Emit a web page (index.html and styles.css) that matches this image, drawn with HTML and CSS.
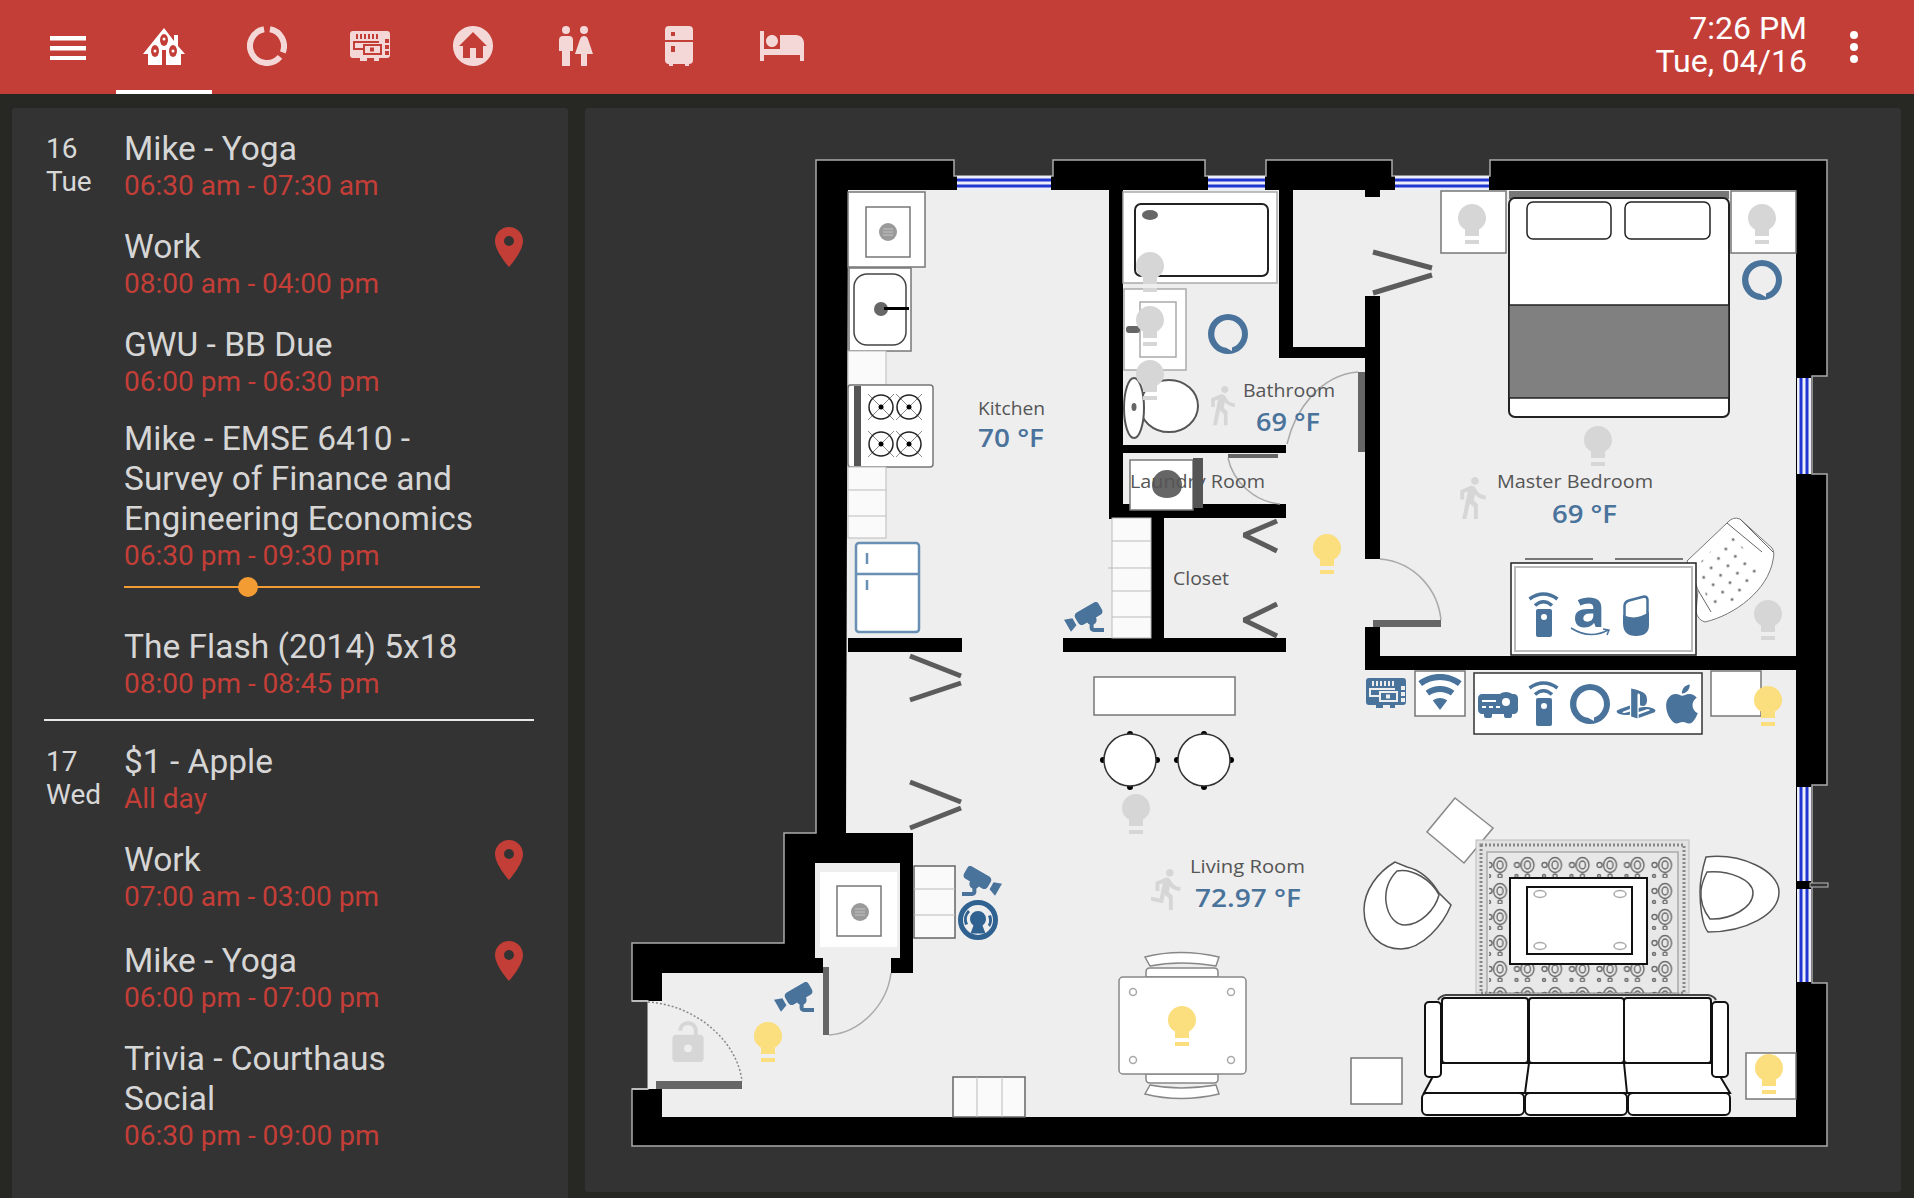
FILE: index.html
```html
<!DOCTYPE html>
<html lang="en">
<head>
    <meta charset="UTF-8">
    <title>Home Dashboard</title>
    <link rel="stylesheet" href="styles.css">
</head>
<body>
    <svg class="defs" width="0" height="0">
        <symbol id="bulb" viewBox="0 0 28 40"><path d="M14 0C6.3 0 0 6.3 0 14c0 5 2.5 9 7 11.5V32h14v-6.500c4.500-2.500 7-6.500 7-11.500C28 6.300 21.700 0 14 0z"/><rect x="7" y="36" width="14" height="4"/></symbol>
        <symbol id="alexa" viewBox="0 0 40 40"><path fill-rule="evenodd" d="M20 0A20 20 0 1 0 20 40A20 20 0 1 0 20 0ZM20 6A14 14 0 0 1 24 33.400L24 37L18 33.800A14 14 0 0 1 20 6Z"/></symbol>
        <symbol id="walk" viewBox="5 1 15 23"><path d="M13.500 5.500c1.100 0 2-.9 2-2s-.9-2-2-2-2 .9-2 2 .9 2 2 2zM9.800 8.900L7 23h2.100l1.800-8 2.100 2v6h2v-7.500l-2.100-2 .6-3C14.800 12 16.800 13 19 13v-2c-1.900 0-3.500-1-4.300-2.400l-1-1.600c-.4-.6-1-1-1.700-1-.3 0-.5.100-.8.100L6 8.300V13h2V9.600l1.800-.7"/></symbol>
        <symbol id="run" viewBox="4 1 16 23"><path d="M13.490 5.480c1.100 0 2-.9 2-2s-.9-2-2-2-2 .9-2 2 .9 2 2 2zm-3.600 13.900l1-4.400 2.100 2v6h2v-7.500l-2.100-2 .6-3c1.300 1.500 3.300 2.500 5.500 2.500v-2c-1.900 0-3.500-1-4.300-2.400l-1-1.600c-.4-.6-1-1-1.700-1-.3 0-.5.100-.8.100l-5.200 2.200v4.700h2v-3.400l1.800-.7-1.600 8.100-4.900-1-.4 2 7 1.400z"/></symbol>
        <symbol id="cctv" viewBox="2 5 20 15"><path d="M18.150 4.940C17.770 4.910 17.370 5 17 5.200L8.350 10.200C7.390 10.760 7.070 12 7.620 12.940L9.120 15.530C9.670 16.500 10.890 16.820 11.850 16.270L13.650 15.230C13.920 15.690 14.320 16.060 14.810 16.270V18.040C14.810 19.130 15.700 20 16.810 20H22V18.040H16.810V16.270C17.720 15.870 18.310 14.970 18.310 14C18.310 13.540 18.190 13.110 17.970 12.730L20.220 11.420C21.180 10.870 21.500 9.660 20.950 8.690L19.450 6.100C19.070 5.460 18.610 5 18.150 4.940M6.220 13.170L2 13.870L2.750 15.170L4.750 18.630L5.500 19.930L8.220 16.630L6.220 13.170Z"/></symbol>
        <symbol id="board" viewBox="0 0 40 30"><path fill-rule="evenodd" d="M3 0H37A3 3 0 0 1 40 3V24A3 3 0 0 1 37 27H29V30H24V27H17V30H10V27H3A3 3 0 0 1 0 24V3A3 3 0 0 1 3 0ZM6 3h2v5H6zM10 3h2v5h-2zM14 3h2v5h-2zM18 3h2v5h-2zM22 3h2v5h-2zM26 3h2v5h-2zM3 10H29V12H5V17H13V19H3ZM35 8h4v4h-4zM35 14h4v4h-4zM35 20h4v4h-4zM13 13H32V24H13ZM15 15V22H30V15ZM20 16.500h4v4h-4Z"/></symbol>
        <symbol id="wifi" viewBox="1 3 22 18"><path d="M12 21L15.600 16.200C14.600 15.450 13.350 15 12 15C10.650 15 9.400 15.450 8.400 16.200L12 21M12 3C7.950 3 4.210 4.340 1.200 6.600L3 9C5.500 7.120 8.620 6 12 6C15.380 6 18.500 7.120 21 9L22.800 6.600C19.790 4.340 16.050 3 12 3M12 9C9.300 9 6.810 9.890 4.800 11.400L6.600 13.800C8.100 12.670 9.970 12 12 12C14.030 12 15.900 12.670 17.400 13.800L19.200 11.400C17.190 9.890 14.700 9 12 9Z"/></symbol>
        <symbol id="remote" viewBox="0 0 31 46"><path class="arc" d="M1.500 8Q15.500 -2 29.500 8"/><path class="arc" d="M7 14.500Q15.500 7 24 14.500"/><path fill-rule="evenodd" d="M10 18H22A2 2 0 0 1 24 20V44A2 2 0 0 1 22 46H10A2 2 0 0 1 8 44V20A2 2 0 0 1 10 18ZM16 23A3 3 0 1 0 16 29A3 3 0 1 0 16 23Z"/></symbol>
        <symbol id="ghome" viewBox="0 0 26 41"><path class="ghome-top" d="M1.500 28V11Q1.500 7 6 5.500L21 1.500Q24.500 1.500 24.500 5V30"/><path d="M0 20Q13 26 26 17V30Q26 41 13 41Q0 41 0 28Z"/></symbol>
        <symbol id="projector" viewBox="2 6 20 13"><path fill-rule="evenodd" d="M16 6C14.870 6 13.770 6.350 12.840 7H4C2.890 7 2 7.890 2 9V15C2 16.110 2.890 17 4 17H5V18A1 1 0 0 0 6 19H8A1 1 0 0 0 9 18V17H15V18A1 1 0 0 0 16 19H18A1 1 0 0 0 19 18V17H20C21.110 17 22 16.110 22 15V9C22 7.890 21.110 7 20 7H19.150C18.230 6.350 17.130 6 16 6ZM16 9A2 2 0 1 0 16 13A2 2 0 1 0 16 9ZM4 10H11V11H4ZM4 13H6V14H4ZM7.500 13H9.500V14H7.500ZM11 13H13V14H11Z"/></symbol>
        <symbol id="playstation" viewBox="1.800 4 20.400 16"><path d="M9.500 4.270C10.880 4.530 12.900 5.140 14 5.500C16.750 6.450 17.690 7.630 17.690 10.290C17.690 12.890 16.090 13.870 14.050 12.890V8.050C14.050 7.500 13.950 6.970 13.410 6.820C13 6.690 12.760 7.070 12.760 7.630V19.730L9.500 18.690V4.270M13.370 17.620L18.620 15.750C19.220 15.540 19.310 15.240 18.830 15.080C18.340 14.920 17.470 14.970 16.870 15.180L13.370 16.410V14.450L13.580 14.380C13.580 14.380 14.590 14 16 13.870C17.430 13.710 19.170 13.890 20.530 14.400C22.070 14.890 22.250 15.610 21.860 16.100C21.470 16.600 20.500 16.950 20.500 16.950L13.370 19.500V17.620M3.500 17.420C1.930 17 1.660 16.050 2.380 15.500C3.050 15 4.180 14.650 4.180 14.650L8.860 13V14.880L5.500 16.090C4.900 16.300 4.810 16.600 5.290 16.760C5.770 16.920 6.650 16.870 7.240 16.660L8.860 16.080V17.770L8.540 17.820C6.920 18.090 5.200 18 3.500 17.420Z"/></symbol>
        <symbol id="apple" viewBox="3.800 2 16.400 20"><path d="M18.710 19.500C17.880 20.740 17 21.950 15.660 21.970C14.320 22 13.890 21.180 12.370 21.180C10.840 21.180 10.370 21.950 9.100 22C7.790 22.050 6.800 20.680 5.960 19.470C4.250 17 2.940 12.450 4.700 9.390C5.570 7.870 7.130 6.910 8.820 6.880C10.100 6.860 11.320 7.750 12.110 7.750C12.890 7.750 14.370 6.680 15.920 6.840C16.570 6.870 18.390 7.100 19.560 8.820C19.470 8.880 17.390 10.100 17.410 12.630C17.440 15.650 20.060 16.660 20.090 16.670C20.060 16.740 19.670 18.110 18.710 19.500M13 3.500C13.730 2.670 14.940 2.040 15.940 2C16.070 3.170 15.600 4.350 14.900 5.190C14.210 6.040 13.070 6.700 11.950 6.610C11.800 5.460 12.360 4.260 13 3.500Z"/></symbol>
        <symbol id="lock" viewBox="4 1 16 21"><path d="M18 8A2 2 0 0 1 20 10V20A2 2 0 0 1 18 22H6A2 2 0 0 1 4 20V10A2 2 0 0 1 6 8H15V6A3 3 0 0 0 12 3A3 3 0 0 0 9 6H7A5 5 0 0 1 12 1A5 5 0 0 1 17 6V8H18M12 17A2 2 0 0 0 14 15A2 2 0 0 0 12 13A2 2 0 0 0 10 15A2 2 0 0 0 12 17Z"/></symbol>
        <symbol id="gauge" viewBox="0 0 40 40"><circle class="gauge-ring" cx="20" cy="20" r="17.500"/><path d="M20 11a8 8 0 0 1 8 8c0 3-1.500 5-3.500 6.500l3 8H12.500l3-8C13.500 24 12 22 12 19a8 8 0 0 1 8-8zM7 25a13.500 13.500 0 0 1 3-15l2 2a10.500 10.500 0 0 0-2 12zM33 15a13.500 13.500 0 0 1-1 12l-2-2a10.500 10.500 0 0 0 0-9z"/></symbol>
        <symbol id="pin" viewBox="5 2 14 20"><path d="M12 2C8.130 2 5 5.130 5 9c0 5.250 7 13 7 13s7-7.750 7-13c0-3.870-3.130-7-7-7zm0 9.500a2.500 2.500 0 0 1 0-5 2.500 2.500 0 0 1 0 5z"/></symbol>
        <pattern id="rug" width="27.500" height="26" patternUnits="userSpaceOnUse" x="1486" y="852">
            <ellipse class="rug-mark" cx="14" cy="13" rx="6.500" ry="7.500"/><ellipse class="rug-mark" cx="14" cy="13" rx="3" ry="4"/><circle class="rug-mark" cx="3.500" cy="13" r="2.500"/><circle class="rug-mark" cx="14" cy="24" r="2"/><circle class="rug-mark" cx="3" cy="24" r="1.500"/>
        </pattern>
        <pattern id="tuft" width="12" height="12" patternUnits="userSpaceOnUse" patternTransform="rotate(38)">
            <circle class="tuft-dot" cx="6" cy="6" r="1.500"/>
        </pattern>
    </svg>

    <header class="appbar">
        <div class="menu-btn">
            <svg width="36" height="24" viewBox="0 0 36 24"><rect width="36" height="4.500"/><rect y="10" width="36" height="4.500"/><rect y="20" width="36" height="4.500"/></svg>
        </div>
        <nav class="tabs">
            <div class="tab active">
                <svg width="42" height="37" viewBox="0 0 42 37"><path d="M21 0L31 13V7H35V18L42 26H38V37H23V22H19V37H5V26H0Z"/><ellipse class="cut" cx="21" cy="12" rx="4" ry="6"/><ellipse class="cut" cx="12" cy="23" rx="4" ry="6"/><ellipse class="cut" cx="30" cy="23" rx="4" ry="6"/><circle cx="21" cy="11" r="1.500"/><circle cx="12" cy="23" r="1.500"/><circle cx="30" cy="23" r="1.500"/></svg>
            </div>
            <div class="tab">
                <svg width="40" height="40" viewBox="0 0 40 40"><path class="tab-ring" d="M22.950 3.260A17 17 0 0 1 35.760 26.370M33.020 30.930A17 17 0 1 1 17.050 3.260"/></svg>
            </div>
            <div class="tab"><svg width="40" height="30"><use href="#board"/></svg></div>
            <div class="tab">
                <svg width="40" height="40" viewBox="2 2 20 20"><path d="M19.070 4.930C17.220 3 14.660 1.960 12 2C9.340 1.960 6.790 3 4.940 4.930C3 6.780 1.960 9.340 2 12C1.960 14.660 3 17.210 4.930 19.060C6.780 21 9.340 22.040 12 22C14.660 22.040 17.210 21 19.060 19.070C21 17.220 22.040 14.660 22 12C22.040 9.340 21 6.780 19.070 4.930M17 12V18H13.500V13H10.500V18H7V12H5L12 5L19 12H17Z"/></svg>
            </div>
            <div class="tab">
                <svg width="34" height="40" viewBox="4 2 17 20"><path d="M7.500 2A2 2 0 0 1 9.500 4A2 2 0 0 1 7.500 6A2 2 0 0 1 5.500 4A2 2 0 0 1 7.500 2M6 7H9A2 2 0 0 1 11 9V14.500H9.500V22H5.500V14.500H4V9A2 2 0 0 1 6 7M16.500 2A2 2 0 0 1 18.500 4A2 2 0 0 1 16.500 6A2 2 0 0 1 14.500 4A2 2 0 0 1 16.500 2M15 22V16H12L14.590 8.410C14.840 7.590 15.600 7 16.500 7C17.400 7 18.160 7.590 18.410 8.410L21 16H18V22H15Z"/></svg>
            </div>
            <div class="tab">
                <svg width="28" height="40" viewBox="5 2 14 20"><path d="M7 2H17A2 2 0 0 1 19 4V9H5V4A2 2 0 0 1 7 2M19 19A2 2 0 0 1 17 21V22H15V21H9V22H7V21A2 2 0 0 1 5 19V10H19V19M8 5V7H10V5H8M8 12V15H10V12H8Z"/></svg>
            </div>
            <div class="tab">
                <svg width="44" height="30" viewBox="1 5 22 15"><path d="M7 13c1.660 0 3-1.340 3-3S8.660 7 7 7s-3 1.340-3 3 1.340 3 3 3zm12-6h-8v7H3V5H1v15h2v-3h18v3h2v-9c0-2.210-1.790-4-4-4z"/></svg>
            </div>
        </nav>
        <div class="clock">
            <div>7:26 PM</div>
            <div>Tue, 04/16</div>
        </div>
        <div class="more-btn"><span></span><span></span><span></span></div>
    </header>

    <main class="content">
        <aside class="panel agenda">
            <section class="day">
                <div class="day-date"><div>16</div><div>Tue</div></div>
                <div class="day-events">
                    <div class="event">
                        <div><div class="event-title">Mike - Yoga</div><div class="event-time">06:30 am - 07:30 am</div></div>
                    </div>
                    <div class="event">
                        <div><div class="event-title">Work</div><div class="event-time">08:00 am - 04:00 pm</div></div>
                        <svg class="pin" width="28" height="40"><use href="#pin"/></svg>
                    </div>
                    <div class="event">
                        <div><div class="event-title">GWU - BB Due</div><div class="event-time">06:00 pm - 06:30 pm</div></div>
                    </div>
                    <div class="event event-tight">
                        <div>
                            <div class="event-title">Mike - EMSE 6410 -<br>Survey of Finance and<br>Engineering Economics</div>
                            <div class="event-time">06:30 pm - 09:30 pm</div>
                            <div class="progress"><div class="progress-line"></div><div class="progress-thumb"></div></div>
                        </div>
                    </div>
                    <div class="event">
                        <div><div class="event-title">The Flash (2014) 5x18</div><div class="event-time">08:00 pm - 08:45 pm</div></div>
                    </div>
                </div>
            </section>
            <section class="day day-next">
                <div class="day-date"><div>17</div><div>Wed</div></div>
                <div class="day-events">
                    <div class="event">
                        <div><div class="event-title">$1 - Apple</div><div class="event-time">All day</div></div>
                    </div>
                    <div class="event">
                        <div><div class="event-title">Work</div><div class="event-time">07:00 am - 03:00 pm</div></div>
                        <svg class="pin" width="28" height="40"><use href="#pin"/></svg>
                    </div>
                    <div class="event event-loose">
                        <div><div class="event-title">Mike - Yoga</div><div class="event-time">06:00 pm - 07:00 pm</div></div>
                        <svg class="pin" width="28" height="40"><use href="#pin"/></svg>
                    </div>
                    <div class="event">
                        <div><div class="event-title">Trivia - Courthaus<br>Social</div><div class="event-time">06:30 pm - 09:00 pm</div></div>
                    </div>
                </div>
            </section>
        </aside>

        <section class="panel plan">
            <!-- viewBox is in screenshot pixels so the floorplan coords read straight off the page -->
            <svg class="floorplan" width="1316" height="1084" viewBox="585 108 1316 1084">
                <!-- shell -->
                <path class="shell" d="M816 160H954V176H1053V160H1205V176H1266V160H1392V176H1490V160H1827V376H1812V474H1827V785H1812V983H1827V1146H632V1089H648V1001H632V943H784V833H816Z"/>
                <path class="floor" d="M848 190H1796V1117H662V1089H648V1001H662V973H913V833H846Z"/>
                <rect class="floor" x="815" y="863" width="85" height="95"/>
                <rect class="floor" x="823" y="950" width="68" height="25"/>
                <line class="thin" x1="632" y1="1001" x2="648" y2="1001"/>
                <line class="thin" x1="632" y1="1089" x2="648" y2="1089"/>

                <!-- windows -->
                <rect class="glass" x="957" y="176" width="94" height="14"/><path class="glass-lines" d="M957 180H1051M957 186H1051"/>
                <rect class="glass" x="1208" y="176" width="57" height="14"/><path class="glass-lines" d="M1208 180H1265M1208 186H1265"/>
                <rect class="glass" x="1395" y="176" width="94" height="14"/><path class="glass-lines" d="M1395 180H1489M1395 186H1489"/>
                <rect class="glass" x="1797" y="378" width="14" height="96"/><path class="glass-lines" d="M1801 378V474M1807 378V474"/>
                <rect class="glass" x="1797" y="787" width="14" height="94"/><path class="glass-lines" d="M1801 787V881M1807 787V881"/>
                <rect class="glass" x="1797" y="889" width="14" height="93"/><path class="glass-lines" d="M1801 889V982M1807 889V982"/>
                <rect class="wall" x="1796" y="881" width="14" height="8"/>
                <rect class="stub" x="1810" y="883" width="18" height="4"/>

                <!-- inner walls -->
                <rect class="wall" x="848" y="638" width="114" height="14"/>
                <rect class="wall" x="1063" y="638" width="223" height="14"/>
                <rect class="wall" x="1109" y="190" width="14" height="329"/>
                <rect class="wall" x="1151" y="518" width="13" height="120"/>
                <rect class="wall" x="1123" y="445" width="163" height="8"/>
                <rect class="wall" x="1109" y="504" width="177" height="14"/>
                <rect class="wall" x="1279" y="190" width="14" height="168"/>
                <rect class="wall" x="1279" y="347" width="86" height="11"/>
                <rect class="wall" x="1365" y="296" width="15" height="263"/>
                <rect class="wall" x="1365" y="190" width="15" height="7"/>
                <rect class="wall" x="1365" y="627" width="15" height="43"/>
                <rect class="wall" x="1365" y="656" width="431" height="14"/>

                <!-- doors -->
                <rect class="door" x="1373" y="620" width="68" height="7"/>
                <path class="swing" d="M1380 559C1415 562 1438 590 1441 620"/>
                <rect class="door" x="1358" y="372" width="7" height="80"/>
                <path class="swing" d="M1358 372C1320 375 1295 410 1287 444"/>
                <rect class="door" x="1228" y="454" width="50" height="4"/>
                <path class="swing" d="M1228 458C1233 482 1255 502 1280 504"/>
                <rect class="door" x="823" y="967" width="6" height="68"/>
                <path class="swing" d="M829 1035C860 1033 887 1005 891 973"/>
                <rect class="door" x="656" y="1081" width="86" height="8"/>
                <path class="swing dotted" d="M648 1002C695 1005 737 1040 742 1081"/>
                <path class="folding" d="M1373 252L1432 268M1373 293L1432 275"/>
                <path class="folding" d="M1277 521L1244 535L1277 551"/>
                <path class="folding" d="M1277 604L1244 620L1277 636"/>
                <path class="folding" d="M910 656L961 676M910 700L961 683"/>
                <path class="folding" d="M910 782L961 802M910 828L961 808"/>

                <!-- kitchen -->
                <rect class="unit" x="848" y="192" width="77" height="75"/>
                <rect class="unit" x="866" y="207" width="44" height="50"/>
                <circle class="dial" cx="888" cy="232" r="9"/>
                <path class="dial-lines" d="M883 229H893M883 232H893M883 235H893"/>
                <rect class="unit" x="849" y="268" width="62" height="83"/>
                <rect class="basin" x="854" y="274" width="52" height="71" rx="13"/>
                <circle class="dial-dark" cx="881" cy="309" r="7"/>
                <rect x="884" y="307" width="25" height="3"/>
                <rect class="counter" x="848" y="351" width="38" height="34"/>
                <rect class="unit" x="848" y="385" width="85" height="82" rx="3"/>
                <rect class="strip" x="854" y="386" width="7" height="80"/>
                <path class="burner-cross" d="M868 394L894 420M894 394L868 420M896 394L922 420M922 394L896 420M868 431L894 457M894 431L868 457M896 431L922 457M922 431L896 457"/>
                <circle class="burner" cx="881" cy="407" r="12"/><circle class="burner" cx="909" cy="407" r="12"/>
                <circle class="burner" cx="881" cy="444" r="12"/><circle class="burner" cx="909" cy="444" r="12"/>
                <circle cx="881" cy="407" r="2.500"/><circle cx="909" cy="407" r="2.500"/>
                <circle cx="881" cy="444" r="2.500"/><circle cx="909" cy="444" r="2.500"/>
                <rect class="counter" x="848" y="467" width="38" height="71"/>
                <path class="hairline" d="M848 490H886M848 516H886"/>
                <rect class="fridge" x="856" y="543" width="63" height="89" rx="3"/>
                <path class="fridge" d="M856 574H919M867 553V564M867 580V590"/>

                <!-- bathroom -->
                <rect class="unit-soft" x="1123" y="192" width="154" height="91"/>
                <rect class="tub" x="1135" y="204" width="133" height="72" rx="6"/>
                <ellipse class="dial-dark" cx="1150" cy="215" rx="8" ry="5"/>
                <rect class="unit-soft" x="1124" y="289" width="62" height="81"/>
                <rect class="unit-soft" x="1140" y="302" width="36" height="55"/>
                <rect class="dial-dark" x="1126" y="326" width="14" height="7" rx="3"/>
                <ellipse class="bowl" cx="1169" cy="406" rx="29" ry="26"/>
                <ellipse class="bowl" cx="1134" cy="408" rx="10" ry="30"/>
                <ellipse class="dial-dark" cx="1134" cy="407" rx="2.500" ry="4"/>

                <!-- laundry + closet -->
                <rect class="unit" x="1130" y="460" width="63" height="50"/>
                <path class="dial-dark" d="M1167 470a15 15 0 0 1 15 15c0 8-6 13-15 13s-15-5-15-13a15 15 0 0 1 15-15z"/>
                <rect class="strip" x="1193" y="458" width="10" height="50"/>
                <rect class="counter" x="1112" y="518" width="39" height="120"/>
                <path class="hairline" d="M1112 541H1151M1108 568H1151M1112 591H1151M1112 617H1151"/>

                <!-- master bedroom -->
                <rect class="unit" x="1441" y="191" width="65" height="62"/>
                <rect class="unit" x="1731" y="191" width="65" height="62"/>
                <rect class="headboard" x="1509" y="191" width="220" height="8"/>
                <rect class="bed" x="1509" y="198" width="220" height="219" rx="6"/>
                <rect class="pillow" x="1527" y="202" width="84" height="37" rx="6"/>
                <rect class="pillow" x="1625" y="202" width="85" height="37" rx="6"/>
                <rect class="blanket" x="1509" y="305" width="220" height="93"/>
                <path class="armchair" d="M1687 561L1727 523Q1733 516 1740 519L1772 548Q1775 552 1773 560C1768 590 1735 615 1705 622Q1698 620 1696 612L1698 590Z"/>
                <path class="armchair-tuft" d="M1697 566L1728 532L1766 572C1750 592 1728 606 1711 612Z"/>
                <path class="hairline-dark" d="M1727 523L1762 552M1740 519L1773 552M1698 590L1711 612"/>
                <path class="legs" d="M1525 559H1593M1615 559H1683"/>
                <rect class="pillow" x="1511" y="563" width="185" height="92"/>
                <rect class="inset" x="1515" y="567" width="177" height="84"/>

                <!-- media shelf -->
                <rect class="unit" x="1415" y="671" width="50" height="45"/>
                <rect class="shelf" x="1474" y="673" width="228" height="61"/>
                <rect class="unit" x="1711" y="671" width="50" height="45"/>

                <!-- living room -->
                <rect class="unit" x="1094" y="677" width="141" height="38"/>
                <circle cx="1130" cy="734" r="3"/><circle cx="1130" cy="787" r="3"/><circle cx="1103" cy="760" r="3"/><circle cx="1157" cy="760" r="3"/>
                <circle cx="1204" cy="734" r="3"/><circle cx="1204" cy="787" r="3"/><circle cx="1177" cy="760" r="3"/><circle cx="1231" cy="760" r="3"/>
                <circle class="stool" cx="1130" cy="760" r="26"/>
                <circle class="stool" cx="1204" cy="760" r="26"/>
                <path class="furn" d="M1146 977V972Q1146 968 1150 968H1214Q1218 968 1218 972V977Z"/>
                <path class="furn" d="M1146 1074V1079Q1146 1083 1150 1083H1214Q1218 1083 1218 1079V1074Z"/>
                <path class="furn" d="M1145 957Q1180 948 1219 957L1216 966Q1180 960 1150 966Z"/>
                <path class="furn" d="M1145 1094Q1180 1103 1219 1094L1216 1085Q1180 1091 1150 1085Z"/>
                <rect class="furn" x="1119" y="977" width="127" height="97" rx="4"/>
                <circle class="peg" cx="1133" cy="992" r="3.500"/><circle class="peg" cx="1231" cy="992" r="3.500"/>
                <circle class="peg" cx="1133" cy="1060" r="3.500"/><circle class="peg" cx="1231" cy="1060" r="3.500"/>
                <path class="furn" d="M1455 798L1493 828L1464 863L1427 832Z"/>
                <rect class="rug-base" x="1476" y="840" width="213" height="153"/>
                <rect class="rug-band" x="1481" y="845" width="203" height="148"/>
                <rect class="rug-line" x="1487" y="852" width="191" height="141"/>
                <rect class="rug-field" x="1489" y="854" width="187" height="139"/>
                <rect class="rug-table" x="1510" y="878" width="137" height="86"/>
                <rect class="rug-table" x="1527" y="887" width="105" height="67"/>
                <ellipse class="peg" cx="1540" cy="894" rx="6" ry="3.500"/><ellipse class="peg" cx="1620" cy="894" rx="6" ry="3.500"/>
                <ellipse class="peg" cx="1540" cy="946" rx="6" ry="3.500"/><ellipse class="peg" cx="1620" cy="946" rx="6" ry="3.500"/>
                <path class="chair" d="M1395 862C1378 872 1364 890 1364 910C1364 935 1382 949 1401 949C1422 949 1443 925 1451 905L1439 893C1430 878 1420 870 1407 867Z"/>
                <path class="chair" d="M1397 871C1388 880 1385 892 1386 902C1388 918 1397 925 1405 925C1420 925 1435 910 1439 895C1432 880 1412 868 1397 871Z"/>
                <path class="chair" d="M1706 857C1740 853 1779 870 1779 892C1779 915 1745 932 1708 932C1702 925 1700 905 1700 892C1700 880 1702 870 1706 857Z"/>
                <path class="chair" d="M1707 872C1730 870 1753 880 1753 893C1753 908 1730 920 1710 919C1703 910 1700 900 1701 890C1702 882 1704 878 1707 872Z"/>

                <!-- sofa -->
                <path class="sofa-back" d="M1438 1000Q1440 996 1446 995H1708Q1714 996 1716 1000"/>
                <path class="sofa" d="M1440 1063L1424 1093H1730L1712 1063Z"/>
                <rect class="sofa" x="1442" y="998" width="86" height="65" rx="3"/>
                <rect class="sofa" x="1529" y="998" width="95" height="65" rx="3"/>
                <rect class="sofa" x="1624" y="998" width="87" height="65" rx="3"/>
                <rect class="sofa" x="1425" y="1002" width="16" height="75" rx="4"/>
                <rect class="sofa" x="1712" y="1002" width="16" height="75" rx="4"/>
                <rect class="sofa" x="1422" y="1093" width="102" height="22" rx="5"/>
                <rect class="sofa" x="1525" y="1093" width="102" height="22" rx="5"/>
                <rect class="sofa" x="1628" y="1093" width="102" height="22" rx="5"/>
                <path class="sofa-line" d="M1529 1063L1525 1093M1624 1063L1627 1093"/>
                <rect class="unit" x="1351" y="1058" width="51" height="46"/>
                <rect class="unit" x="1746" y="1053" width="50" height="46"/>

                <!-- entry closet -->
                <rect class="unit-plain" x="820" y="872" width="77" height="75"/>
                <rect class="unit" x="837" y="886" width="44" height="50"/>
                <circle class="dial" cx="860" cy="912" r="9"/>
                <path class="dial-lines" d="M855 909H865M855 912H865M855 915H865"/>
                <rect class="counter-edge" x="914" y="866" width="41" height="72"/>
                <path class="hairline" d="M914 889H955M914 915H955"/>
                <rect class="counter-edge" x="953" y="1077" width="72" height="40"/>
                <path class="hairline" d="M977 1077V1117M1002 1077V1117"/>

                <!-- devices -->
                <use class="off" href="#bulb" x="1136" y="252" width="28" height="40"/>
                <use class="off" href="#bulb" x="1136" y="306" width="28" height="40"/>
                <use class="off" href="#bulb" x="1136" y="360" width="28" height="40"/>
                <use class="off" href="#bulb" x="1458" y="204" width="28" height="40"/>
                <use class="off" href="#bulb" x="1748" y="204" width="28" height="40"/>
                <use class="off" href="#bulb" x="1584" y="426" width="28" height="40"/>
                <use class="off" href="#bulb" x="1754" y="600" width="28" height="40"/>
                <use class="off" href="#bulb" x="1122" y="794" width="28" height="40"/>
                <use class="on" href="#bulb" x="1313" y="534" width="28" height="40"/>
                <use class="on" href="#bulb" x="1754" y="686" width="28" height="40"/>
                <use class="on" href="#bulb" x="754" y="1022" width="28" height="40"/>
                <use class="on" href="#bulb" x="1168" y="1006" width="28" height="40"/>
                <use class="on" href="#bulb" x="1755" y="1054" width="28" height="40"/>
                <use class="off" href="#walk" x="1209" y="385" width="28" height="42"/>
                <use class="off" href="#walk" x="1458" y="476" width="30" height="45"/>
                <use class="off" href="#run" x="1151" y="868" width="32" height="44"/>
                <use class="off" href="#lock" x="672" y="1021" width="32" height="41"/>
                <use class="dev" href="#alexa" x="1208" y="314" width="40" height="40"/>
                <use class="dev" href="#alexa" x="1742" y="260" width="40" height="40"/>
                <use class="dev" href="#alexa" x="1570" y="684" width="40" height="40"/>
                <use class="dev" href="#cctv" x="1064" y="602" width="40" height="30"/>
                <use class="dev" href="#cctv" x="774" y="982" width="40" height="30"/>
                <use class="dev" href="#cctv" transform="translate(1964 0) scale(-1 1)" x="962" y="866" width="40" height="30"/>
                <use class="dev-dark" href="#gauge" x="958" y="900" width="40" height="40"/>
                <use class="dev" href="#board" x="1366" y="678" width="40" height="30"/>
                <use class="dev" href="#wifi" x="1418" y="674" width="44" height="36"/>
                <use class="dev" href="#remote" x="1528" y="591" width="31" height="46"/>
                <use class="dev" href="#remote" x="1528" y="680" width="31" height="46"/>
                <use class="dev" href="#ghome" x="1623" y="595" width="26" height="41"/>
                <use class="dev" href="#projector" x="1478" y="692" width="40" height="26"/>
                <use class="dev" href="#playstation" x="1616" y="688" width="40" height="31"/>
                <use class="dev" href="#apple" x="1666" y="684" width="32" height="40"/>
                <text class="amazon" x="1589" y="627">a</text>
                <path class="smile" d="M1571 628Q1590 640 1608 630M1603 629L1609 630L1607 635"/>

                <!-- labels -->
                <text class="room" x="978" y="415" textLength="67" lengthAdjust="spacingAndGlyphs">Kitchen</text>
                <text class="temp" x="978" y="447" textLength="66" lengthAdjust="spacingAndGlyphs">70 °F</text>
                <text class="room" x="1243" y="397" textLength="92" lengthAdjust="spacingAndGlyphs">Bathroom</text>
                <text class="temp" x="1256" y="431" textLength="64" lengthAdjust="spacingAndGlyphs">69 °F</text>
                <text class="room" x="1130" y="488" textLength="135" lengthAdjust="spacingAndGlyphs">Laundry Room</text>
                <text class="room" x="1173" y="585" textLength="56" lengthAdjust="spacingAndGlyphs">Closet</text>
                <text class="room" x="1497" y="488" textLength="156" lengthAdjust="spacingAndGlyphs">Master Bedroom</text>
                <text class="temp" x="1552" y="523" textLength="65" lengthAdjust="spacingAndGlyphs">69 °F</text>
                <text class="room" x="1190" y="873" textLength="115" lengthAdjust="spacingAndGlyphs">Living Room</text>
                <text class="temp" x="1195" y="907" textLength="106" lengthAdjust="spacingAndGlyphs">72.97 °F</text>
            </svg>
        </section>
    </main>
</body>
</html>
```

FILE: styles.css
```css
html, body {
    margin: 0;
    padding: 0;
    height: 100%;
}
body {
    background-color: #272823;
    font-family: "Roboto", sans-serif;
    overflow: hidden;
}
.defs {
    position: absolute;
}

/* top bar */
.appbar {
    display: flex;
    align-items: center;
    height: 94px;
    background-color: #c43e38;
    color: #fff;
    fill: #fff;
}
.menu-btn {
    display: flex;
    width: 36px;
    margin-left: 50px;
    margin-top: 2px;
}
.tabs {
    display: flex;
    margin-left: 30px;
    height: 94px;
}
.tab {
    display: flex;
    align-items: center;
    justify-content: center;
    box-sizing: border-box;
    width: 96px;
    height: 94px;
    margin-right: 7px;
    border-bottom: 4px solid transparent;
    padding-top: 2px;
    opacity: 0.8;
}
.tab.active {
    opacity: 1;
    border-bottom-color: #fff;
}
.tab .cut {
    fill: #c43e38;
}
.tab-ring {
    fill: none;
    stroke: #fff;
    stroke-width: 6;
}
.clock {
    margin-left: auto;
    margin-top: -4px;
    font-size: 32px;
    line-height: 33px;
    text-align: right;
}
.more-btn {
    display: flex;
    flex-direction: column;
    gap: 4px;
    margin: 0 56px 0 43px;
}
.more-btn span {
    width: 8px;
    height: 8px;
    border-radius: 50%;
    background-color: #fff;
}

/* page body */
.content {
    display: flex;
    gap: 17px;
    height: 1104px;
    padding: 14px 13px 0 12px;
}
.panel {
    background-color: #333333;
    border-radius: 3px;
}
.agenda {
    flex: 0 0 556px;
    box-sizing: border-box;
    padding: 9px 34px 0 32px;
    overflow: hidden;
}
.plan {
    flex: 1;
    height: 1084px;
}
.floorplan {
    display: block;
}

/* agenda */
.day {
    display: flex;
    padding-bottom: 6px;
}
.day-next {
    border-top: 2px solid #e8e8e8;
    padding-top: 9px;
}
.day-date {
    flex: 0 0 78px;
    margin-top: 15px;
    padding-left: 2px;
    font-size: 28px;
    line-height: 33px;
    color: #d8d8d8;
}
.day-events {
    flex: 1;
}
.event {
    display: flex;
    align-items: flex-start;
    justify-content: space-between;
    padding: 12px 11px 13px 0;
}
.event-tight {
    margin-top: -4px;
}
.event-loose {
    margin-top: 3px;
}
.event-title {
    font-size: 33.500px;
    line-height: 40px;
    color: #d6d6d6;
}
.event-time {
    font-size: 28px;
    line-height: 33px;
    color: #c43e38;
}
.pin {
    fill: #c43e38;
}
.progress {
    position: relative;
    display: flex;
    align-items: center;
    width: 356px;
    height: 30px;
}
.progress-line {
    width: 100%;
    height: 2px;
    background-color: #f39c33;
}
.progress-thumb {
    position: absolute;
    left: 114px;
    top: 5px;
    width: 20px;
    height: 20px;
    border-radius: 50%;
    background-color: #f39c33;
}

/* floorplan */
.shell {
    fill: #000;
    stroke: #aaa;
    stroke-width: 1.500;
}
.floor {
    fill: #eeeeee;
}
.wall {
    fill: #000;
}
.stub {
    fill: #333;
    stroke: #bbb;
}
.thin {
    stroke: #bbb;
    stroke-width: 2;
}
.glass {
    fill: #eceef8;
}
.glass-lines {
    fill: none;
    stroke: #2136d0;
    stroke-width: 3;
}
.door {
    fill: #666;
}
.swing {
    fill: none;
    stroke: #aaa;
    stroke-width: 1.500;
}
.dotted {
    stroke-dasharray: 2 2;
    stroke: #888;
}
.folding {
    fill: none;
    stroke: #5c5c5c;
    stroke-width: 5;
    stroke-linejoin: bevel;
}
.unit {
    fill: #fff;
    stroke: #777;
    stroke-width: 1.500;
}
.unit-soft {
    fill: #fff;
    stroke: #aaa;
    stroke-width: 1.500;
}
.unit-plain {
    fill: #fff;
}
.counter {
    fill: #fafafa;
    stroke: #bbb;
}
.counter-edge {
    fill: #fafafa;
    stroke: #666;
    stroke-width: 1.500;
}
.basin {
    fill: #fff;
    stroke: #444;
    stroke-width: 1.500;
}
.tub {
    fill: #fff;
    stroke: #222;
    stroke-width: 2;
}
.bowl {
    fill: #fff;
    stroke: #555;
    stroke-width: 2;
}
.dial {
    fill: #9a9a9a;
}
.dial-lines {
    fill: none;
    stroke: #c4c4c4;
}
.dial-dark {
    fill: #666;
}
.strip {
    fill: #555;
}
.burner {
    fill: none;
    stroke: #222;
    stroke-width: 1.500;
}
.burner-cross {
    fill: none;
    stroke: #888;
}
.hairline {
    fill: none;
    stroke: #bbb;
}
.hairline-dark {
    fill: none;
    stroke: #666;
}
.fridge {
    fill: #fff;
    stroke: #6a8fb5;
    stroke-width: 2.500;
}
.headboard {
    fill: #777;
}
.bed {
    fill: #fff;
    stroke: #222;
    stroke-width: 2;
}
.pillow {
    fill: #fff;
    stroke: #222;
    stroke-width: 1.500;
}
.blanket {
    fill: #808080;
    stroke: #222;
    stroke-width: 1.500;
}
.inset {
    fill: #fff;
    stroke: #bbb;
    stroke-width: 2;
}
.armchair {
    fill: #fff;
    stroke: #777;
}
.armchair-tuft {
    fill: url(#tuft);
}
.tuft-dot {
    fill: #777;
}
.legs {
    fill: none;
    stroke: #777;
    stroke-width: 2;
}
.shelf {
    fill: #fff;
    stroke: #333;
    stroke-width: 1.500;
}
.stool {
    fill: #fff;
    stroke: #333;
    stroke-width: 1.500;
}
.furn {
    fill: #fff;
    stroke: #888;
    stroke-width: 1.500;
}
.peg {
    fill: #fff;
    stroke: #aaa;
    stroke-width: 1.500;
}
.rug-base {
    fill: #e2e2e2;
    stroke: #bbb;
}
.rug-field {
    fill: url(#rug);
}
.rug-line {
    fill: #e8e8e8;
    stroke: #aaa;
    stroke-width: 1.500;
}
.rug-band {
    fill: none;
    stroke: #888;
    stroke-dasharray: 2 2;
    stroke-width: 3;
}
.rug-mark {
    fill: none;
    stroke: #6c6c6c;
    stroke-width: 1.400;
}
.rug-table {
    fill: #fff;
    stroke: #111;
    stroke-width: 2;
}
.chair {
    fill: #fff;
    stroke: #555;
    stroke-width: 1.500;
}
.sofa {
    fill: #fff;
    stroke: #111;
    stroke-width: 2;
}
.sofa-back {
    fill: none;
    stroke: #444;
    stroke-width: 2;
}
.sofa-line {
    fill: none;
    stroke: #111;
    stroke-width: 2;
}

/* devices on the plan */
.off {
    fill: #d6d6d6;
}
.on {
    fill: #fbde7e;
}
.dev {
    fill: #4a739c;
    color: #4a739c;
}
.dev-dark {
    fill: #2f6191;
}
.arc {
    fill: none;
    stroke: currentColor;
    stroke-width: 3.500;
}
.ghome-top {
    fill: #fff;
    stroke: currentColor;
    stroke-width: 2.500;
}
.gauge-ring {
    fill: none;
    stroke: #2f6191;
    stroke-width: 5;
}
.amazon {
    font-family: "Open Sans", sans-serif;
    font-size: 54px;
    font-weight: 700;
    text-anchor: middle;
    fill: #4a739c;
}
.smile {
    fill: none;
    stroke: #4a739c;
    stroke-width: 1.500;
}
.room {
    font-family: "Open Sans", sans-serif;
    font-size: 19px;
    fill: #555;
}
.temp {
    font-family: "Open Sans", sans-serif;
    font-size: 26px;
    font-weight: 600;
    fill: #4a739c;
}
```
